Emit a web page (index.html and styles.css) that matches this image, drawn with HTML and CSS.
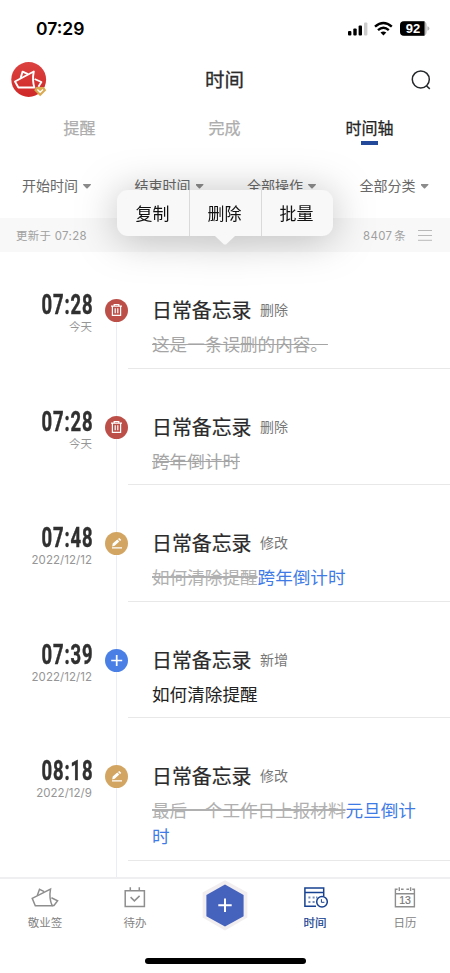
FILE: index.html
```html
<!DOCTYPE html>
<html lang="zh-CN">
<head>
<meta charset="utf-8">
<title>时间</title>
<link rel="stylesheet" href="styles.css">
</head>
<body>
<svg class="defs" width="0" height="0">
  <symbol id="trash" viewBox="0 0 23 23"><g fill="none" stroke="#fff" stroke-width="1.2"><path d="M6 7.2h11M9.2 7V5.5h4.6V7M7.4 7.5v8.9h8.2V7.5M10.2 9.3v5M12.8 9.3v5"/></g></symbol>
  <symbol id="edit" viewBox="0 0 23 23"><path d="M7 15.9h10" stroke="#fff" stroke-width="1.2"/><path d="M7.2 14.4l.5-2.8 4.6-4 2 2-4.6 4.1zM13 7l1.3-1.1 2 2-1.3 1.1z" fill="#fff"/></symbol>
  <symbol id="plus" viewBox="0 0 23 23"><path d="M6.2 11.5h11M11.7 6v11" stroke="#fff" stroke-width="1.7"/></symbol>
</svg>
<div class="screen">
  <div class="status">
    <span class="clock">07:29</span>
    <svg class="signals" width="82" height="16" viewBox="0 0 82 16">
      <g><rect x="0" y="10" width="3.4" height="4.5" rx="1"/><rect x="5.3" y="7.6" width="3.4" height="6.9" rx="1"/><rect x="10.6" y="4.6" width="3.4" height="9.9" rx="1"/><rect x="16" y="1.5" width="3.4" height="13" rx="1" fill="#ccc"/></g>
      <g fill="none" stroke="#000" stroke-width="2.4"><path d="M27 5.7Q35.4-1.6 43.8 5.7M30 9.1Q35.4 4.3 40.8 9.1"/></g>
      <path d="M32.5 11.5Q35.4 9.3 38.3 11.5L35.4 14.5Z"/>
      <rect x="52" y=".3" width="26.6" height="14.5" rx="4" fill="#bbb"/><path d="M56 .3h20.5v14.5H56a4 4 0 0 1-4-4V4.3a4 4 0 0 1 4-4z"/><path d="M79.4 5.3q2 .5 2 2.2t-2 2.2z" fill="#bbb"/>
      <text x="65" y="12.1" text-anchor="middle" class="battery">92</text>
    </svg>
  </div>
  <header class="header">
    <svg class="avatar" width="36" height="36" viewBox="0 0 36 36">
      <defs><linearGradient id="red" x2="0" y2="1"><stop stop-color="#dc4240"/><stop offset="1" stop-color="#cf2928"/></linearGradient></defs>
      <circle cx="17.7" cy="17.5" r="17.4" fill="url(#red)"/>
      <g fill="none" stroke="#fff" stroke-width="1.9" stroke-linejoin="round"><path d="M4 19.5L22.8 9.5Q21 18 23.4 25.5H7.4Z"/><path d="M9.6 16L11.6 9.6L17 12.2M23.6 17L30.4 20L27.4 24.8"/></g>
      <path d="M25.2 25h7.7l2.3 3.2-6 6.1-6-6.1z" fill="#dba950"/><path d="M26.4 27.6l2.8 2.6 2.8-2.6" fill="none" stroke="#fff" stroke-width="1.4"/>
    </svg>
    <h1>时间</h1>
    <svg class="search" width="20" height="20" viewBox="0 0 20 20"><g fill="none" stroke="#26292b" stroke-width="1.5"><circle cx="9.8" cy="9.4" r="8.5"/><path d="M15.4 15.7l3.4 3.2"/></g></svg>
  </header>
  <nav class="tabs"><span>提醒</span><span>完成</span><span class="on">时间轴</span></nav>
  <div class="filters"><span>开始时间</span><span>结束时间</span><span>全部操作</span><span>全部分类</span></div>
  <div class="summary">
    <span class="updated">更新于 07:28</span><span>8407<small>条</small></span>
    <svg width="16" height="12" viewBox="0 0 16 12"><path d="M1 1.5h14M1 6.5h14M1 11.3h14" stroke="#b9b9b9" stroke-width="1"/></svg>
  </div>
  <main class="list">
    <article class="item first">
      <div class="when"><b>07:28</b><span>今天</span></div>
      <div class="mark"><svg class="dot red"><use href="#trash"/></svg></div>
      <div class="entry"><h2>日常备忘录<small>删除</small></h2><p><del class="thin">这是一条误删的内容。</del></p></div>
    </article>
    <article class="item">
      <div class="when"><b>07:28</b><span>今天</span></div>
      <div class="mark"><svg class="dot red"><use href="#trash"/></svg></div>
      <div class="entry"><h2>日常备忘录<small>删除</small></h2><p><del class="thin">跨年倒计时</del></p></div>
    </article>
    <article class="item">
      <div class="when"><b>07:48</b><span>2022/12/12</span></div>
      <div class="mark"><svg class="dot gold"><use href="#edit"/></svg></div>
      <div class="entry"><h2>日常备忘录<small>修改</small></h2><p><del>如何清除提醒</del><ins>跨年倒计时</ins></p></div>
    </article>
    <article class="item">
      <div class="when"><b>07:39</b><span>2022/12/12</span></div>
      <div class="mark"><svg class="dot blue"><use href="#plus"/></svg></div>
      <div class="entry"><h2>日常备忘录<small>新增</small></h2><p>如何清除提醒</p></div>
    </article>
    <article class="item">
      <div class="when"><b>08:18</b><span>2022/12/9</span></div>
      <div class="mark"><svg class="dot gold"><use href="#edit"/></svg></div>
      <div class="entry"><h2>日常备忘录<small>修改</small></h2><p><del>最后一个工作日上报材料</del><ins>元旦倒计时</ins></p></div>
    </article>
    <div class="tail"></div>
  </main>
  <footer class="tabbar">
    <div class="tab"><svg width="28" height="24" viewBox="0 0 28 24"><g fill="none" stroke="#8e8e8e" stroke-width="1.5"><path d="M1.2 11.3L19.5 2.2Q17.8 11.5 21.2 18.7H4.3Z"/><path d="M6.3 8.5L8.5 2.3L13.2 4.6M20.4 10.8L26.6 13.8L23 18.5H20.7"/></g></svg><span>敬业签</span></div>
    <div class="tab"><svg width="24" height="24" viewBox="0 0 24 24"><g fill="none" stroke="#8e8e8e" stroke-width="1.5"><path d="M2.2 3.8h19.2v15.7H2.2zM7.3 .3v3M16.3 .3v3M7.6 10.1l3.8 3.8 5.2-5"/></g></svg><span>待办</span></div>
    <div class="tab add"><svg width="48" height="54" viewBox="0 0 48 54"><path d="M24 1.2L46.4 13.4V38.6L24 51.5L1.6 38.6V13.4Z" fill="#f2eeef"/><path d="M24 5.6L42.6 16V37.2L24 47.4L5.4 37.2V16Z" fill="#4562bd"/><path d="M17.3 26.3h13.4M24 19.6V33" stroke="#fff" stroke-width="2"/></svg></div>
    <div class="tab current"><svg width="26" height="24" viewBox="0 0 26 24"><g fill="none" stroke="#174291" stroke-width="1.5"><path d="M14 19.2H2.9V.9h18.8v8M2.9 5.5h18.8"/><circle cx="20" cy="14.7" r="5.3"/><path d="M19.4 12.2v3.1h3" stroke-width="1"/></g><path d="M6.4 10.4h2M10.6 10.4h2M14 10.4h1.4M6.4 14.9h2M10.6 14.9h2" stroke="#174291" stroke-width="2" opacity=".6"/></svg><span>时间</span></div>
    <div class="tab"><svg width="24" height="24" viewBox="0 0 24 24"><g fill="none" stroke="#8e8e8e" stroke-width="1.4"><path d="M4.6 2.2H2.4v17.6h19V2.2h-2.2M8 2.2h2.6M13.4 2.2H16M2.4 6.8h19M6.3 .3v3.6M17.6 .3v3.6"/></g><text x="12" y="16.8" text-anchor="middle" class="day">13</text></svg><span>日历</span></div>
  </footer>
  <div class="home"></div>
  <div class="menu"><span>复制</span><span>删除</span><span>批量</span></div>
</div>
</body>
</html>
```
FILE: styles.css
```css
* { box-sizing: border-box; }
body { margin: 0; background: #fff; font-family: Inter, "Noto Sans CJK SC", sans-serif; color: #2b2b2b; }
.defs { display: block; height: 0; }
.screen { position: relative; width: 450px; height: 973px; overflow: hidden; display: flex; flex-direction: column; background: #fff; }
.status { height: 56px; padding: 0 20px 0 36px; display: flex; justify-content: space-between; align-items: center; }
.clock { font-size: 17.5px; font-weight: 600; color: #000; line-height: 20px; margin-top: 2px; }
.signals { width: 82px; margin-top: 1px; }
.battery { font: bold 13px "Liberation Sans", sans-serif; fill: #fff; }
.header { height: 48px; padding: 0 19px 0 11px; display: grid; grid-template-columns: 36px 1fr 20px; align-items: center; }
h1 { margin: -2px 0 0 -9px; text-align: center; font: 400 19.5px/28px "Noto Sans CJK SC", sans-serif; -webkit-text-stroke: .3px currentColor; }
.tabs { height: 48px; padding: 12px 8px 0 7px; display: grid; grid-template-columns: repeat(3, 1fr); text-align: center; font-size: 16px; line-height: 25px; font-weight: 400; -webkit-text-stroke: .25px currentColor; color: #adadad; }
.on { color: #242424; }
.on::after { content: ""; display: block; width: 17px; height: 3.5px; margin: 0 auto; background: #22499a; }
.filters { height: 66px; padding: 24px 0 22px; display: grid; grid-template-columns: repeat(4, 112.5px); text-align: left; font-size: 14px; line-height: 20px; color: #686868; }
.filters span { display: flex; align-items: center; gap: 5px; padding-left: 22px; }
.filters span::after { content: ""; width: 8px; height: 5px; background: #8c8c8c; clip-path: polygon(5% 0, 95% 0, 100% 25%, 55% 100%, 45% 100%, 0 25%); }
.summary { height: 34px; flex: none; padding: 0 17px 0 16px; display: flex; align-items: center; background: #f8f8f8; color: #a0a0a0; font-size: 11.4px; letter-spacing: .35px; }
.updated { margin-right: auto; }
.summary small { font-size: 11.4px; margin-left: 2px; }
.summary svg { margin-left: 11px; }
.list { flex: 1; min-height: 0; overflow: hidden; display: flex; flex-direction: column; }
.item { flex: none; display: grid; grid-template-columns: 92px 13px 23px 1fr; }
.when { grid-column: 1; display: flex; flex-direction: column; align-items: flex-end; padding-top: 39px; }
.when b { font: bold 27.5px/28px Roboto, sans-serif; letter-spacing: 1.3px; margin-right: -1.3px; transform: scaleX(.67); transform-origin: right; color: #303030; -webkit-text-stroke: .5px #303030; }
.when span { font-size: 11.5px; line-height: 16px; letter-spacing: .05px; color: #969696; }
.mark { grid-column: 3; padding-top: 47px; background: linear-gradient(#ececf5, #ececf5) 11px 0 / 1px 100% no-repeat; }
.first .mark { background-position: 11px 58px; }
.dot { display: block; width: 23px; height: 23px; border-radius: 50%; }
.red { background: #bc5049; }
.gold { background: #d3a562; }
.blue { background: #4a80e6; }
.entry { grid-column: 4; padding: 43px 25px 10.5px 24px; border-bottom: 1px solid #e8e8e8; }
h2 { margin: 0 0 7px; height: 29px; display: flex; align-items: center; font: 400 19.9px/29px "Noto Sans CJK SC", sans-serif; -webkit-text-stroke: .22px currentColor; }
h2 small { font-size: 14px; font-weight: 400; color: #777; margin-left: 8.5px; -webkit-text-stroke: 0; }
.entry p { margin: 0; font-size: 17.6px; line-height: 26px; color: #222; font-family: "Noto Sans CJK SC", sans-serif; }
del { color: #b0b0b0; text-decoration: line-through 2.4px; }
.thin { color: #a5a5a5; text-decoration-thickness: 1px; }
ins { color: #3f7be6; text-decoration: none; }
.tail { flex: 1; margin-left: 116px; border-left: 1px solid #ececf5; }
.tabbar { height: 60px; flex: none; border-top: 2px solid #efeff1; display: grid; grid-template-columns: repeat(5, 1fr); color: #848484; font-size: 11.5px; line-height: 16px; }
.tab { display: flex; flex-direction: column; align-items: center; padding-top: 8px; }
.tab span { margin-top: 4px; }
.add { padding-top: 0; }
.current { color: #174291; -webkit-text-stroke: .2px currentColor; }
.day { font: 10.5px "Liberation Sans", sans-serif; fill: #777; stroke: #777; stroke-width: .2px; }
.home { width: 161px; height: 6px; flex: none; margin: 21px auto 9px; background: #000; border-radius: 3px; }
.menu { position: absolute; left: 117px; top: 190px; width: 216px; height: 55px; padding-bottom: 9px; display: grid; grid-template-columns: repeat(3, 1fr); font-size: 17px; line-height: 48px; text-align: center; color: #111; filter: drop-shadow(0 3px 20px rgba(0,0,0,.26)); }
.menu span { background: #f8f8f8; padding-right: 1px; height: 46px; }
.menu span + span { border-left: 1px solid #dadada; padding-right: 2px; }
.menu span:first-child { border-radius: 11px 0 0 11px; }
.menu span:last-child { border-radius: 0 11px 11px 0; }
.menu::after { content: ""; position: absolute; left: 98px; top: 46px; width: 20px; height: 9px; background: #f8f8f8; clip-path: polygon(0 0, 100% 0, 55% 95%, 45% 95%); }
```
